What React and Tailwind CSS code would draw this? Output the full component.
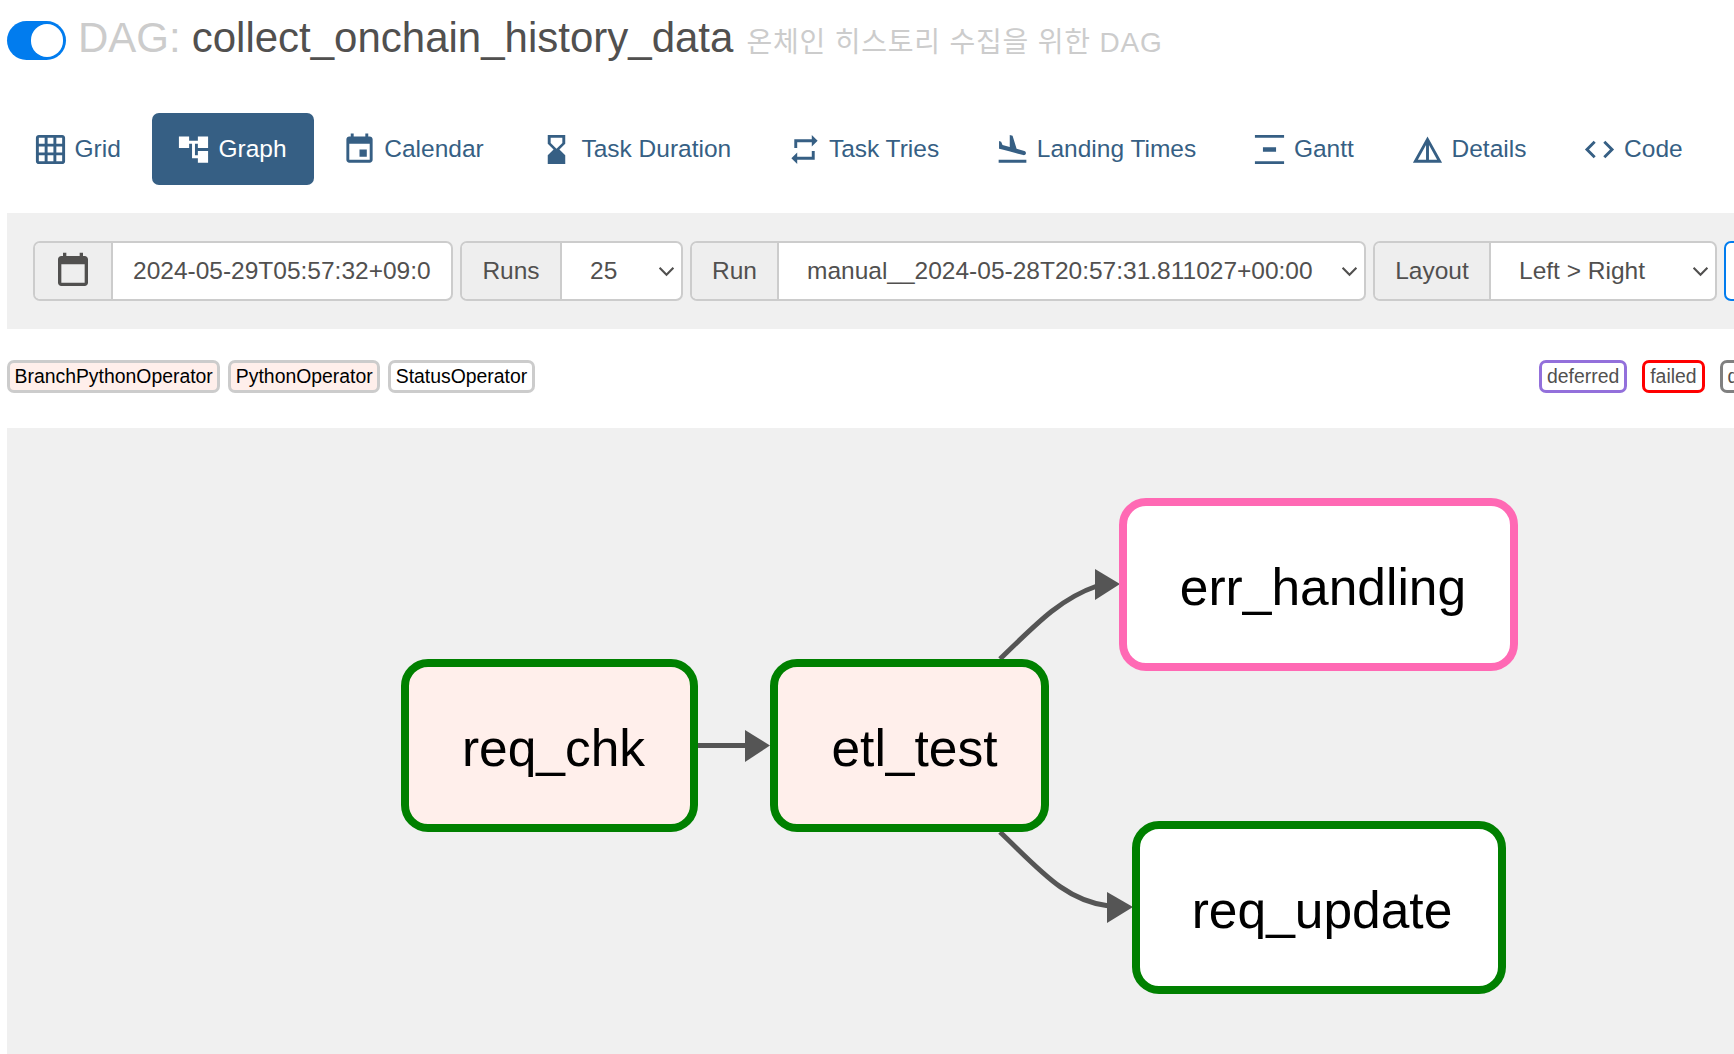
import React from "react";

const P = {
  grid: "M20 2H4c-1.1 0-2 .9-2 2v16c0 1.1.9 2 2 2h16c1.1 0 2-.9 2-2V4c0-1.1-.9-2-2-2zM8 20H4v-4h4v4zm0-6H4v-4h4v4zm0-6H4V4h4v4zm6 12h-4v-4h4v4zm0-6h-4v-4h4v4zm0-6h-4V4h4v4zm6 12h-4v-4h4v4zm0-6h-4v-4h4v4zm0-6h-4V4h4v4z",
  tree: "M22 11V3h-7v3H9V3H2v8h7V8h2v10h4v3h7v-8h-7v3h-2V8h2v3z",
  event: "M17 12h-5v5h5v-5zM16 1v2H8V1H6v2H5c-1.11 0-1.99.9-1.99 2L3 19c0 1.1.89 2 2 2h14c1.1 0 2-.9 2-2V5c0-1.1-.9-2-2-2h-1V1h-2zm3 18H5V8h14v11z",
  hour: "M18 22l-.01-6L14 12l3.99-4.01L18 2H6v6l4 4-4 3.99V22h12zM8 7.5V4h8v3.5l-4 4-4-4z",
  repeat: "M7 7h10v3l4-4-4-4v3H5v6h2V7zm10 10H7v-3l-4 4 4 4v-3h12v-6h-2v4z",
  land: "M2.5 19h19v2h-19zm7.18-5.73l4.35 1.16 5.31 1.42c.8.21 1.62-.26 1.84-1.06.21-.8-.26-1.62-1.06-1.84l-5.31-1.42-2.76-9.02L10.12 2v8.28L5.15 8.95l-.93-2.32-1.45-.39v5.17l1.6.43 5.31 1.43z",
  gantt: "M2 22h20v-2H2v2zM2 2v2h20V2H2zm5.5 8.5v3h9v-3h-9z",
  details: "M12 3L2 21h20L12 3zm1 5.92L18.6 19H13V8.92zm-2 0V19H5.4L11 8.92z",
  code: "M9.4 16.6L4.8 12l4.6-4.6L8 6l-6 6 6 6 1.4-1.4zm5.2 0l4.6-4.6-4.6-4.6L16 6l6 6-6 6-1.4-1.4z",
  cal: "M19 3h-1V1h-2v2H8V1H6v2H5c-1.11 0-2 .9-2 2v14c0 1.1.89 2 2 2h14c1.1 0 2-.9 2-2V5c0-1.1-.9-2-2-2zm0 16H5V8h14v11z",
};

function Icon({ d, className }) {
  return (
    <svg viewBox="0 0 24 24" className={className} fill="currentColor">
      <path d={d} />
    </svg>
  );
}

function Pill({ icon, label, active }) {
  return (
    <div
      className={
        "flex items-center h-[72px] px-[27px] gap-[7px] rounded-[7px] flex-none " +
        (active ? "bg-[#365f84] text-white" : "text-[#365f84]")
      }
    >
      <Icon d={icon} className="w-[35px] h-[35px] flex-none -ml-[3px]" />
      <span>{label}</span>
    </div>
  );
}

function Chevron() {
  return (
    <svg viewBox="0 0 16 10" className="w-[17px] h-[11px] flex-none" fill="none" stroke="#51504f" strokeWidth="2">
      <path d="M1.5 1.5L8 8l6.5-6.5" />
    </svg>
  );
}

function Group({ w, addonW, label, value, pl, children }) {
  return (
    <div
      className="flex flex-none h-[60px] rounded-[7px] border-2 border-[#ccc] bg-white overflow-hidden"
      style={{ width: w }}
    >
      <div
        className="flex flex-none items-center justify-center bg-[#eee] border-r-2 border-[#ccc]"
        style={{ width: addonW }}
      >
        {label}
      </div>
      <div className="flex flex-1 items-center justify-between pr-[6px] whitespace-nowrap overflow-hidden" style={{ paddingLeft: pl }}>
        <span>{value}</span>
        {children}
      </div>
    </div>
  );
}

function Badge({ label, border, bg, dark }) {
  return (
    <span
      className={"flex items-center h-[33px] rounded-[7px] border-[3.6px] text-[19.4px] flex-none " + (dark ? "text-black px-[4.5px]" : "text-[#51504f] px-[5px]")}
      style={{ borderColor: border, backgroundColor: bg }}
    >
      {label}
    </span>
  );
}

function Node({ x, y, w, h, border, bg, label, dx }) {
  return (
    <div
      className="absolute flex items-center justify-center rounded-[27px] border-[8px] text-[51.5px] text-black"
      style={{ left: x, top: y, width: w, height: h, borderColor: border, backgroundColor: bg }}
    >
      <span style={{ marginLeft: dx, marginTop: 6 }}>{label}</span>
    </div>
  );
}

export default function App() {
  return (
    <div className="relative w-[1734px] h-[1054px] overflow-hidden bg-white text-[#51504f] text-[24.5px] font-['Liberation_Sans','Noto_Sans_CJK_KR',sans-serif]">
      <div className="flex items-center h-[39px] mt-[21px] ml-[7px] whitespace-nowrap">
        <div className="relative w-[59px] h-[39px] rounded-full bg-[#017cee] flex-none">
          <div className="absolute left-[24px] top-[3px] w-[32px] h-[33px] rounded-full bg-white" />
        </div>
        <span className="ml-[12px] text-[42px] text-[#ccc] mb-[7px]">DAG:</span>
        <span className="ml-[11px] text-[42px] mb-[7px]">collect_onchain_history_data</span>
        <span className="ml-[13px] text-[28px] tracking-[0.8px] text-[#ccc] mt-[5px]">온체인 히스토리 수집을 위한 DAG</span>
      </div>

      <div className="flex gap-[4.7px] ml-[8.5px] mt-[53px] whitespace-nowrap">
        <Pill icon={P.grid} label="Grid" />
        <Pill icon={P.tree} label="Graph" active />
        <Pill icon={P.event} label="Calendar" />
        <Pill icon={P.hour} label="Task Duration" />
        <Pill icon={P.repeat} label="Task Tries" />
        <Pill icon={P.land} label="Landing Times" />
        <Pill icon={P.gantt} label="Gantt" />
        <Pill icon={P.details} label="Details" />
        <Pill icon={P.code} label="Code" />
      </div>

      <div className="flex gap-[7px] ml-[7px] mt-[28px] h-[116px] bg-[#f0f0f0] pl-[26px] pt-[28px]">
        <Group w={420} addonW={78} pl={20} value="2024-05-29T05:57:32+09:0" label={<Icon d={P.cal} className="w-[40px] h-[40px] -ml-[1px]" />} />
        <Group w={223} addonW={100} pl={28} label="Runs" value="25"><Chevron /></Group>
        <Group w={676} addonW={87} pl={28} label="Run" value="manual__2024-05-28T20:57:31.811027+00:00"><Chevron /></Group>
        <Group w={344} addonW={116} pl={28} label="Layout" value="Left > Right"><Chevron /></Group>
        <div className="h-[60px] w-[100px] flex-none rounded-[7px] border-2 border-[#017cee] bg-white" />
      </div>

      <div className="flex ml-[7px] mt-[31px] h-[33px] whitespace-nowrap">
        <div className="flex flex-none gap-[8px] w-[1532px]">
          <Badge label="BranchPythonOperator" border="#ccc" bg="#ffefeb" dark />
          <Badge label="PythonOperator" border="#ccc" bg="#ffefeb" dark />
          <Badge label="StatusOperator" border="#ccc" bg="#fff" dark />
        </div>
        <div className="flex flex-none gap-[15px]">
          <Badge label="deferred" border="#9370db" bg="#fff" />
          <Badge label="failed" border="#ff0000" bg="#fff" />
          <Badge label="queued" border="#808080" bg="#fff" />
        </div>
      </div>

      <div className="relative ml-[7px] mt-[35px] h-[626px] bg-[#f0f0f0]">
        <svg className="absolute left-[-7px] top-[-428px] w-[1734px] h-[1054px]" viewBox="0 0 1734 1054" fill="none">
          <g stroke="#555" strokeWidth="5">
            <path d="M698 745.5H746" />
            <path d="M1000 659C1040 620 1062 598 1097 586" />
            <path d="M1000 832C1040 870 1065 901 1109 906" />
          </g>
          <g fill="#555" stroke="none">
            <path d="M745 730L770 745.5L745 762Z" />
            <path d="M1095 569L1120 584L1095 600Z" />
            <path d="M1107 892L1133 907L1107 923Z" />
          </g>
        </svg>
        <Node x={394} y={231} w={297} h={173} border="#008000" bg="#ffefeb" label="req_chk" dx={8} />
        <Node x={763} y={231} w={279} h={173} border="#008000" bg="#ffefeb" label="etl_test" dx={10} />
        <Node x={1112} y={70} w={399} h={173} border="#ff69b4" bg="#fff" label="err_handling" dx={9} />
        <Node x={1125} y={393} w={374} h={173} border="#008000" bg="#fff" label="req_update" dx={6} />
      </div>
    </div>
  );
}
